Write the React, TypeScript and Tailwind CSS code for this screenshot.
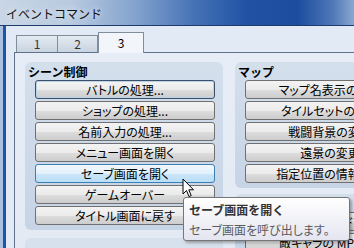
const sceneButtons = [
  'バトルの処理...',
  'ショップの処理...',
  '名前入力の処理...',
  'メニュー画面を開く',
  'セーブ画面を開く',
  'ゲームオーバー',
  'タイトル画面に戻す',
];

const mapButtons = [
  'マップ名表示の変更...',
  'タイルセットの変更...',
  '戦闘背景の変更...',
  '遠景の変更...',
  '指定位置の情報取得...',
];

const effectButtons = ['画面のフェードアウト...', '敵キャラの MP 変更...'];

function CmdButton({ label, state }: { label: string; state?: 'default' | 'hover' }) {
  const base =
    'flex h-[19px] w-[180px] shrink-0 items-center justify-center rounded-[3px] border text-[12px] leading-none text-black [font-feature-settings:"palt"]';
  if (state === 'hover') {
    return (
      <div
        className={`${base} border-[#3c7fb1] bg-[linear-gradient(180deg,#f1f8fd_0%,#e2f1fb_50%,#cbe6f8_51%,#b9def6_100%)]`}
      >
        {label}
      </div>
    );
  }
  if (state === 'default') {
    return (
      <div
        className={`${base} border-[#3d5068] bg-[linear-gradient(180deg,#f3f3f3_0%,#ebebeb_50%,#dddddd_51%,#cdcdcd_100%)] shadow-[inset_0_0_0_1px_#b9d4ea]`}
      >
        {label}
      </div>
    );
  }
  return (
    <div
      className={`${base} border-[#707070] bg-[linear-gradient(180deg,#f3f3f3_0%,#ebebeb_50%,#dddddd_51%,#cdcdcd_100%)]`}
    >
      {label}
    </div>
  );
}

function Group({ title, children }: { title: string; children?: React.ReactNode }) {
  return (
    <section className="flex shrink-0 flex-col rounded-[6px] bg-[linear-gradient(180deg,#d4dfec_0%,#c6d4e6_100%)] pb-[5px]">
      <h3 className="h-[18px] pl-[3px] pt-[3px] text-[12px] font-bold leading-[13px] text-black">{title}</h3>
      <div className="flex flex-col gap-[2px] pl-[10px]">{children}</div>
    </section>
  );
}

function Cursor() {
  return (
    <svg className="absolute left-[182px] top-[178px]" width="13" height="20" viewBox="0 0 13 20">
      <path
        d="M1 1 L1 16 L4.5 12.5 L7 18.5 L9.2 17.6 L6.8 11.8 L11.5 11.8 Z"
        fill="#fff"
        stroke="#000"
        strokeWidth="1"
      />
    </svg>
  );
}

export default function App() {
  return (
    <div className="relative h-[248px] w-[354px] overflow-hidden bg-[#e2eaf5] font-['Noto_Sans_CJK_JP',sans-serif] select-none">
      <header className="flex h-[26px] items-center border-b border-[#1d3c6c] bg-[linear-gradient(90deg,#c9d6e5_0%,#b8cae0_20%,#84a3ce_38%,#4572b5_55%,#2052a4_70%,#1c4c9e_84%,#4f78b7_94%,#8aa7d0_100%)] pl-[6px] pt-[2px]">
        <span className="text-[12px] leading-none text-[#111] [text-shadow:0_0_6px_#fff]">イベントコマンド</span>
      </header>

      <div className="flex h-[222px]">
        <div className="w-[6px] shrink-0 bg-[linear-gradient(90deg,#a9c0de_0%,#a9c0de_50%,#1f55a7_50%,#1f55a7_100%)]" />

        <div className="flex flex-1 flex-col pt-[6px]">
          <div className="flex h-[20px] items-end pl-[10px]">
            <div className="flex h-[17px] w-[42px] items-center justify-center border border-b-0 border-[#7f8d9d] bg-[linear-gradient(180deg,#e3eaf1_0%,#c9d4e0_100%)] text-[12px] leading-none text-[#333]">
              1
            </div>
            <div className="flex h-[17px] w-[40px] items-center justify-center border border-b-0 border-l-0 border-[#7f8d9d] bg-[linear-gradient(180deg,#e3eaf1_0%,#c9d4e0_100%)] text-[12px] leading-none text-[#333]">
              2
            </div>
            <div className="relative z-10 -mb-px flex h-[21px] w-[46px] items-center justify-center border border-b-0 border-[#7f8d9d] bg-[#f2f6fb] text-[12px] leading-none text-black">
              3
            </div>
          </div>

          <div className="ml-[8px] flex flex-1 gap-[12px] border-l border-t border-[#5f728b] bg-[linear-gradient(180deg,#e6edf7_0%,#e3eaf4_100%)] pl-[10px] pt-[9px]">
            <div className="flex w-[198px] shrink-0 flex-col gap-[8px]">
              <Group title="シーン制御">
                {sceneButtons.map((b, i) => (
                  <CmdButton key={b} label={b} state={i === 0 ? 'default' : i === 4 ? 'hover' : undefined} />
                ))}
              </Group>
              <div className="h-[20px] shrink-0 rounded-t-[6px] bg-[#d7e1ee]" />
            </div>
            <div className="flex w-[200px] shrink-0 flex-col gap-[6px]">
              <Group title="マップ">
                {mapButtons.map((b) => (
                  <CmdButton key={b} label={b} />
                ))}
              </Group>
              <Group title="画面効果">
                {effectButtons.map((b) => (
                  <CmdButton key={b} label={b} />
                ))}
              </Group>
            </div>
          </div>
        </div>
      </div>

      <Cursor />

      <div className="absolute left-[183px] top-[197px] flex h-[44px] w-[167px] flex-col rounded-[3px] border border-[#767676] bg-[linear-gradient(180deg,#ffffff_0%,#e4e5f0_100%)] pl-[5px] pt-[5px] shadow-[2px_2px_3px_rgba(0,0,0,0.3)]">
        <div className="text-[12px] font-bold leading-[14px] text-[#333]">セーブ画面を開く</div>
        <div className="mt-[6px] text-[12px] leading-[14px] text-[#5a5a5a] [font-feature-settings:'palt']">
          セーブ画面を呼び出します。
        </div>
      </div>
    </div>
  );
}
